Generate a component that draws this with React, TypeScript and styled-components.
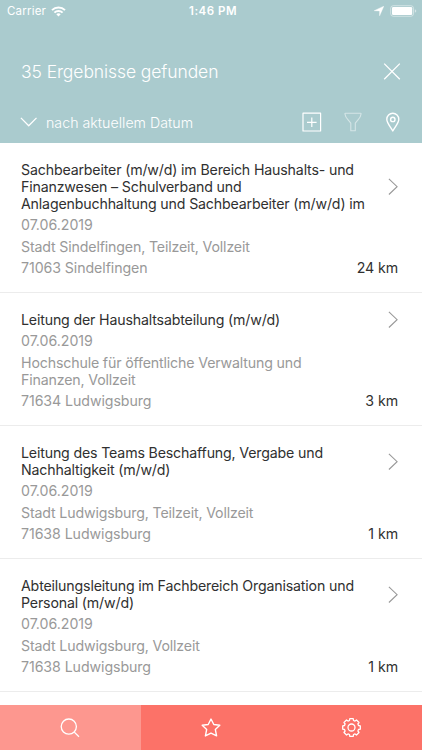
import styled, { createGlobalStyle } from "styled-components";

interface Job {
    title : string;
    date : string;
    company : string;
    place : string;
    distance : string;
}

const jobs : Job[] = [
    {
        title : 'Sachbearbeiter (m/w/d) im Bereich Haushalts- und Finanzwesen – Schulverband und Anlagenbuchhaltung und Sachbearbeiter (m/w/d) im',
        date : '07.06.2019',
        company : 'Stadt Sindelfingen, Teilzeit, Vollzeit',
        place : '71063 Sindelfingen',
        distance : '24 km',
    },
    {
        title : 'Leitung der Haushaltsabteilung (m/w/d)',
        date : '07.06.2019',
        company : 'Hochschule für öffentliche Verwaltung und Finanzen, Vollzeit',
        place : '71634 Ludwigsburg',
        distance : '3 km',
    },
    {
        title : 'Leitung des Teams Beschaffung, Vergabe und Nachhaltigkeit (m/w/d)',
        date : '07.06.2019',
        company : 'Stadt Ludwigsburg, Teilzeit, Vollzeit',
        place : '71638 Ludwigsburg',
        distance : '1 km',
    },
    {
        title : 'Abteilungsleitung im Fachbereich Organisation und Personal (m/w/d)',
        date : '07.06.2019',
        company : 'Stadt Ludwigsburg, Vollzeit',
        place : '71638 Ludwigsburg',
        distance : '1 km',
    },
];

const App = () => {
    return (
        <StScreen>
            <GlobalStyle/>
            <StHeader>
                <StStatusBar>
                    <StCarrier>
                        <span>Carrier</span>
                        <WifiIcon/>
                    </StCarrier>
                    <StClock>1:46 PM</StClock>
                    <StStatusRight>
                        <LocationArrowIcon/>
                        <BatteryIcon/>
                    </StStatusRight>
                </StStatusBar>
                <StTitleRow>
                    <StTitle>35 Ergebnisse gefunden</StTitle>
                    <StIcon width = '18' height = '18' viewBox = '0 0 18 18' strokeWidth = '1.3'>
                        <path d = 'M1.2 1.6l15.6 15.6M16.8 1.6L1.2 17.2'/>
                    </StIcon>
                </StTitleRow>
                <StSortRow>
                    <StIcon width = '17' height = '10' viewBox = '0 0 17 10' strokeWidth = '1.3'>
                        <path d = 'M.9.9l7.8 7.8L16.5.9'/>
                    </StIcon>
                    <StSortLabel>nach aktuellem Datum</StSortLabel>
                    <StActions>
                        <StIcon width = '20' height = '20' viewBox = '0 0 20 20' strokeWidth = '1.2'>
                            <path d = 'M1 1.2h17.6v17.8H1zM9.8 5.5v9.6M5 10.3h9.6'/>
                        </StIcon>
                        <StIcon width = '18' height = '20' viewBox = '0 0 18 20' strokeWidth = '1.1' $faded>
                            <path d = 'M1.6 1.2h14.8q.8 0 .6.9c-.3 2.2-1.2 4-2.8 5.5L11.3 11.2v7.6H6.8v-7.6L3.9 7.6C2.3 6.1 1.3 4.3 1 2.1Q.8 1.2 1.6 1.2z'/>
                        </StIcon>
                        <StIcon width = '14' height = '20' viewBox = '0 0 14 20' strokeWidth = '1.4'>
                            <path d = 'M6.8 19C4.6 14.9.8 11.2.8 7.3a6 6 0 0 1 12 0C12.8 11.2 9 14.9 6.8 19z'/>
                            <circle cx = '6.8' cy = '7.4' r = '2.2'/>
                        </StIcon>
                    </StActions>
                </StSortRow>
            </StHeader>
            <StList>
                {jobs.map((job) => (
                    <StJob key = {job.title}>
                        <StJobHead>
                            <StJobTitle>{job.title}</StJobTitle>
                            <StChevron width = '10' height = '17' viewBox = '0 0 10 17'>
                                <path d = 'M.9.9l8.2 7.8L.9 16.5'/>
                            </StChevron>
                        </StJobHead>
                        <StJobDate>{job.date}</StJobDate>
                        <StJobText>{job.company}</StJobText>
                        <StJobFoot>
                            <StJobPlace>{job.place}</StJobPlace>
                            <StDistance>{job.distance}</StDistance>
                        </StJobFoot>
                    </StJob>
                ))}
            </StList>
            <StTabBar>
                <StTab $active>
                    <StIcon width = '20' height = '20' viewBox = '0 0 20 20' strokeWidth = '1.3'>
                        <circle cx = '8.8' cy = '8.6' r = '7.6'/>
                        <path d = 'M14.3 14.1l4.7 4.6'/>
                    </StIcon>
                </StTab>
                <StTab>
                    <StIcon width = '20' height = '20' viewBox = '0 0 20 20' strokeWidth = '1.4'>
                        <path d = 'M10 1l2.8 5.5 6 .8-4.5 4.1 1.3 6.5-5.6-2.8-5.6 2.8 1.3-6.5L1.2 7.3l6-.8z'/>
                    </StIcon>
                </StTab>
                <StTab>
                    <StIcon width = '20' height = '20' viewBox = '-9.5 -9.5 20 20' strokeWidth = '1.3'>
                        <path d = 'M-1.7-8.8H1.7L2-7 3.5-6.4 5-7.5 7.5-5 6.4-3.5 7-2 8.8-1.7V1.7L7 2 6.4 3.5 7.5 5 5 7.5 3.5 6.4 2 7 1.7 8.8H-1.7L-2 7-3.5 6.4-5 7.5-7.5 5-6.4 3.5-7 2-8.8 1.7V-1.7L-7-2-6.4-3.5-7.5-5-5-7.5-3.5-6.4-2-7z'/>
                        <circle cx = '0' cy = '0' r = '3.5'/>
                    </StIcon>
                </StTab>
            </StTabBar>
        </StScreen>
    );
};

export default App;

const WifiIcon = () => (
    <svg width = '15' height = '11' viewBox = '0 0 15 11' fill = 'none' stroke = 'white' strokeWidth = '2'>
        <path d = 'M1 4.1a9.3 9.3 0 0 1 13 0'/>
        <path d = 'M3.4 6.6a5.8 5.8 0 0 1 8.2 0'/>
        <path d = 'M7.5 10.5L5.3 8.3a3.2 3.2 0 0 1 4.4 0z' fill = 'white' stroke = 'none'/>
    </svg>
);

const LocationArrowIcon = () => (
    <svg width = '10' height = '10' viewBox = '0 0 10 10' fill = 'white'>
        <path d = 'M9.8.2L5.6 9.8V4.9L.2 4.7z' stroke = 'white' strokeWidth = '.4'/>
    </svg>
);

const BatteryIcon = () => (
    <svg width = '27' height = '12' viewBox = '0 0 27 12' fill = 'none'>
        <rect x = '.7' y = '.7' width = '22.8' height = '10.6' rx = '2.6' stroke = 'white' strokeOpacity = '.45'/>
        <rect x = '2' y = '2' width = '20.2' height = '8' rx = '1.3' fill = 'white'/>
        <path d = 'M24.8 4.2q1.5.5 1.5 1.8t-1.5 1.8z' fill = 'white' fillOpacity = '.5'/>
    </svg>
);

const GlobalStyle = createGlobalStyle`
    body {
        margin : 0;
        background-color : white;
        font-family : 'Inter', sans-serif;
    }
    svg {
        display : block;
        flex-shrink : 0;
    }
`

const StScreen = styled.div`
    display : flex;
    flex-direction : column;
    width : 422px;
    height : 750px;
    overflow : hidden;
`

const StHeader = styled.header`
    display : flex;
    flex-direction : column;
    flex-shrink : 0;
    box-sizing : border-box;
    height : 143px;
    color : white;
    background-color : #AACBCE;
`

const StStatusBar = styled.div`
    display : grid;
    grid-template-columns : 1fr auto 1fr;
    align-items : center;
    height : 22px;
    padding : 0 5px 0 7px;
    font-size : 11.5px;
`

const StCarrier = styled.div`
    display : flex;
    align-items : center;
    gap : 5px;
    letter-spacing : .2px;
`

const StClock = styled.div`
    padding-left : 2px;
    font-weight : 600;
    letter-spacing : .5px;
`

const StStatusRight = styled.div`
    display : flex;
    align-items : center;
    justify-content : flex-end;
    gap : 6px;
`

const StTitleRow = styled.div`
    display : flex;
    align-items : center;
    justify-content : space-between;
    height : 24px;
    margin-top : 37px;
    padding : 0 21px;
`

const StTitle = styled.h1`
    margin : 0;
    font-size : 17.5px;
    font-weight : 350;
    letter-spacing : -.09px;
`

const StSortRow = styled.div`
    display : flex;
    align-items : center;
    height : 24px;
    margin-top : 27px;
    padding : 0 22px 0 20px;
`

const StSortLabel = styled.div`
    margin-left : 9px;
    font-size : 14.2px;
    font-weight : 350;
    letter-spacing : .02px;
`

const StActions = styled.div`
    display : flex;
    align-items : center;
    gap : 22px;
    margin-left : auto;

    svg:last-child {
        margin-left : 2px;
    }
`

const StIcon = styled.svg<{$faded? : boolean}>`
    fill : none;
    stroke : white;
    stroke-linejoin : round;
    opacity : ${({$faded}) => $faded ? .5 : 1};
`

const StList = styled.main`
    flex : 1;
    overflow : hidden;
`

const StJob = styled.article`
    display : flex;
    flex-direction : column;
    gap : 4.3px;
    padding : 18.4px 24px 15.7px 21px;
    border-bottom : 1px solid #ECECEC;
    font-size : 14.2px;
    line-height : 17px;
    letter-spacing : -.17px;
`

const StJobHead = styled.div`
    display : flex;
    align-items : center;
    justify-content : space-between;
    margin-bottom : -.6px;
`

const StJobTitle = styled.h2`
    width : 350px;
    margin : 0;
    color : #303030;
    font-size : inherit;
    font-weight : 400;
`

const StJobText = styled.div`
    max-width : 346px;
    color : #999;
    letter-spacing : -.16px;
`

const StJobDate = styled(StJobText)`
    margin-bottom : .6px;
    letter-spacing : -.04px;
`

const StJobPlace = styled(StJobText)`
    letter-spacing : -.08px;
`

const StJobFoot = styled.div`
    display : flex;
    justify-content : space-between;
`

const StDistance = styled.div`
    color : #303030;
    word-spacing : .4px;
`

const StChevron = styled.svg`
    fill : none;
    stroke : #999;
    stroke-width : 1.1;
`

const StTabBar = styled.nav`
    display : flex;
    flex-shrink : 0;
    height : 45px;
    background-color : #FC7268;
`

const StTab = styled.div<{$active? : boolean}>`
    display : flex;
    flex : 1;
    align-items : center;
    justify-content : center;
    background-color : ${({$active}) => $active ? '#FD978F' : 'transparent'};
`
